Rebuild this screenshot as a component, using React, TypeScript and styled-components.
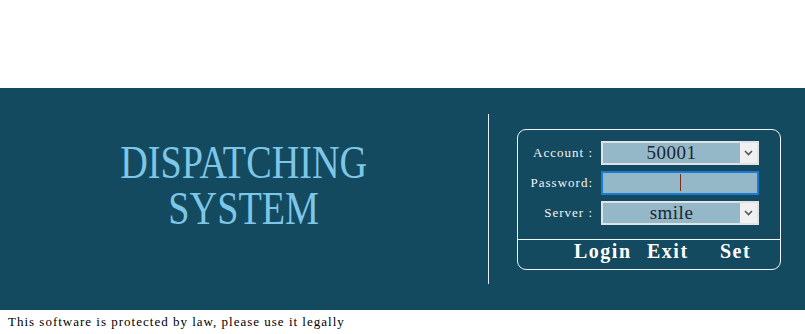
import styled, { createGlobalStyle } from "styled-components";

const GlobalStyle = createGlobalStyle`
  html, body {
    margin: 0;
    padding: 0;
    background: #ffffff;
  }
`;

const Page = styled.div`
  width: 805px;
  height: 334px;
  display: flex;
  flex-direction: column;
  background: #ffffff;
  font-family: "Liberation Serif", serif;
`;

const TopSpace = styled.div`
  height: 88px;
`;

const Band = styled.section`
  height: 222px;
  display: flex;
  align-items: center;
  background-color: #134a5f;
`;

const LeftPane = styled.div`
  width: 488px;
  height: 100%;
  display: flex;
  align-items: center;
  justify-content: center;
  padding-bottom: 26px;
  box-sizing: border-box;
`;

const Title = styled.h1`
  margin: 0;
  font-family: "Liberation Serif", serif;
  font-weight: normal;
  font-size: 46px;
  line-height: 46px;
  text-align: center;
  color: #7ec6e6;
  transform: scaleX(0.83);
`;

const VLine = styled.div`
  width: 1px;
  height: 170px;
  background: #e8eef2;
`;

const RightPane = styled.div`
  flex: 1;
  display: flex;
  align-items: center;
  padding-left: 28px;
`;

const Panel = styled.div`
  width: 264px;
  height: 141px;
  box-sizing: border-box;
  border: 1px solid #f2f5f7;
  border-radius: 9px;
  display: flex;
  flex-direction: column;
`;

const Form = styled.div`
  display: grid;
  grid-template-columns: 75px 158px;
  column-gap: 8px;
  row-gap: 6px;
  align-items: center;
  padding-top: 11px;
  height: 109px;
  box-sizing: border-box;
  align-content: start;
`;

const Label = styled.label`
  font-family: "Liberation Serif", serif;
  font-size: 13px;
  letter-spacing: 1px;
  color: #f2f6f8;
  text-align: right;
  white-space: pre;
`;

const Field = styled.div<{ $focus?: boolean }>`
  height: 24px;
  box-sizing: border-box;
  display: flex;
  background: #94b8c8;
  border: ${(p) => (p.$focus ? "2px solid #1a7ad4" : "2px solid #dfe3e5")};
`;

const FieldText = styled.div`
  flex: 1;
  display: flex;
  align-items: center;
  justify-content: center;
  font-family: "Liberation Serif", serif;
  font-size: 19px;
  letter-spacing: 0.5px;
  color: #1a2630;
`;

const Caret = styled.span`
  width: 1px;
  height: 17px;
  background: #7a3018;
`;

const ArrowBox = styled.div`
  width: 17px;
  display: flex;
  align-items: center;
  justify-content: center;
  background: #f0f0f0;
`;

const HLine = styled.div`
  height: 1px;
  background: #f2f5f7;
`;

const Buttons = styled.div`
  flex: 1;
  display: grid;
  grid-template-columns: 73px 73px auto;
  align-items: center;
  padding: 0 0 7px 56px;
`;

const Btn = styled.button`
  padding: 0;
  border: none;
  background: transparent;
  text-align: left;
  font-family: "Liberation Serif", serif;
  font-weight: bold;
  font-size: 20px;
  line-height: 22px;
  letter-spacing: 1.5px;
  color: #ffffff;
  cursor: pointer;
`;

const Footer = styled.footer`
  height: 24px;
  display: flex;
  align-items: center;
  padding-left: 8px;
  font-family: "Liberation Serif", serif;
  font-size: 13px;
  letter-spacing: 1px;
  color: #000000;
`;

const Chevron = () => (
  <svg width="9" height="6" viewBox="0 0 9 6">
    <path d="M1 1 L4.5 4.5 L8 1" fill="none" stroke="#555" strokeWidth="1.6" />
  </svg>
);

const Select = ({ value }: { value: string }) => (
  <Field>
    <FieldText>{value}</FieldText>
    <ArrowBox>
      <Chevron />
    </ArrowBox>
  </Field>
);

const App = () => {
  return (
    <Page>
      <GlobalStyle />
      <TopSpace />
      <Band>
        <LeftPane>
          <Title>
            DISPATCHING
            <br />
            SYSTEM
          </Title>
        </LeftPane>
        <VLine />
        <RightPane>
          <Panel>
            <Form>
              <Label>Account :</Label>
              <Select value="50001" />
              <Label>Password:</Label>
              <Field $focus>
                <FieldText>
                  <Caret />
                </FieldText>
              </Field>
              <Label>Server :</Label>
              <Select value="smile" />
            </Form>
            <HLine />
            <Buttons>
              <Btn>Login</Btn>
              <Btn>Exit</Btn>
              <Btn>Set</Btn>
            </Buttons>
          </Panel>
        </RightPane>
      </Band>
      <Footer>This software is protected by law, please use it legally</Footer>
    </Page>
  );
};

export default App;
